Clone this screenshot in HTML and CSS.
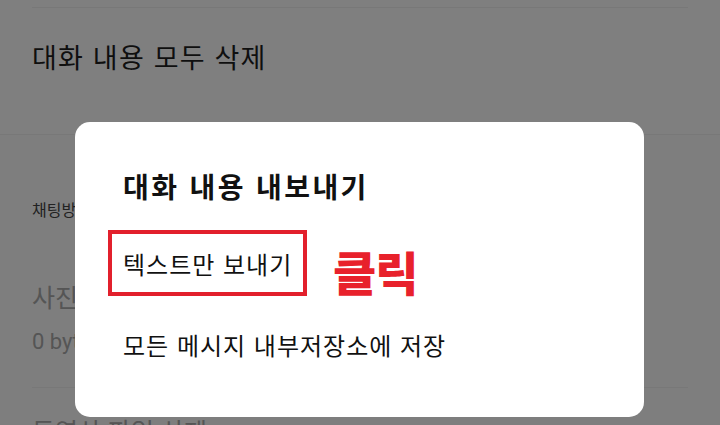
FILE: index.html
```html
<!DOCTYPE html>
<html lang="ko">
<head>
<meta charset="utf-8">
<title>대화 내용 내보내기</title>
<link rel="stylesheet" href="styles.css">
</head>
<body>
<div class="screen">
  <section class="group group-top">
    <div class="rule"></div>
    <div class="item item-main">대화 내용 모두 삭제</div>
  </section>
  <section class="group group-storage">
    <div class="group-label">채팅방 저장공간 관리</div>
    <div class="item item-disabled">
      <div class="item-title">사진 파일 삭제</div>
      <div class="item-sub">0 bytes</div>
    </div>
    <div class="rule rule-item"></div>
    <div class="item item-disabled item-next">
      <div class="item-title">동영상 파일 삭제</div>
    </div>
  </section>

  <div class="scrim">
    <div class="dialog">
      <h2 class="dialog-title">대화 내용 내보내기</h2>
      <div class="option-row">
        <div class="option option-marked">텍스트만 보내기</div>
        <span class="callout">클릭</span>
      </div>
      <div class="option option-plain">모든 메시지 내부저장소에 저장</div>
    </div>
  </div>
</div>
</body>
</html>
```

FILE: styles.css
```css
* { box-sizing: border-box; margin: 0; padding: 0; }

html, body {
  width: 720px;
  height: 425px;
  overflow: hidden;
}

body {
  font-family: "Noto Sans CJK KR", "Noto Sans", sans-serif;
  color: #222;
  background: #fcfcfc;
}

.screen {
  position: relative;
  width: 720px;
  height: 425px;
  overflow: hidden;
}

/* settings list underneath the dialog */
.group-top {
  height: 135px;
  background: #ffffff;
  padding-top: 7px;
  border-bottom: 1px solid #f0f0f0;
}

.rule {
  height: 1px;
  margin: 0 32px;
  background: #f0f0f0;
}

.item-main {
  font-size: 27px;
  letter-spacing: 1.2px;
  line-height: 32px;
  margin: 33px 0 0 32px;
  color: #1e1e1e;
}

.group-storage {
  padding: 64px 0 0 32px;
  background: #fdfdfd;
}

.group-label {
  font-size: 16px;
  line-height: 20px;
  color: #444;
}

.item-disabled {
  margin-top: 62px;
  color: #aaaaaa;
}

.item-title {
  font-size: 25px;
  line-height: 30px;
}

.item-sub {
  margin-top: 18px;
  font-family: "Roboto", "Noto Sans", sans-serif;
  font-size: 22px;
  line-height: 26px;
}

.rule-item {
  margin: 32px 32px 0 0;
}

.item-next {
  margin-top: 27px;
}

/* dim layer and dialog */
.scrim {
  position: absolute;
  inset: 0;
  background: rgba(0, 0, 0, 0.5);
}

.dialog {
  position: absolute;
  left: 75px;
  top: 122px;
  width: 569px;
  height: 295px;
  background: #ffffff;
  border-radius: 15px;
  padding: 47px 0 0 48px;
  display: flex;
  flex-direction: column;
}

.dialog-title {
  font-size: 28px;
  font-weight: 700;
  line-height: 34px;
  letter-spacing: 2.4px;
  color: #111;
}

.option-row {
  display: flex;
  align-items: flex-end;
  margin: 27px 0 0 -15px;
}

.option {
  font-size: 24px;
  line-height: 30px;
  letter-spacing: 1px;
  color: #111;
}

.option-marked {
  width: 199px;
  height: 66px;
  border: 4px solid #e2202c;
  padding: 15px 0 0 11px;
}

.callout {
  margin: 0 0 0 26px;
  font-size: 47px;
  font-weight: 900;
  line-height: 50px;
  color: #e8212b;
  letter-spacing: -1px;
}

.option-plain {
  margin-top: 34px;
}
```
